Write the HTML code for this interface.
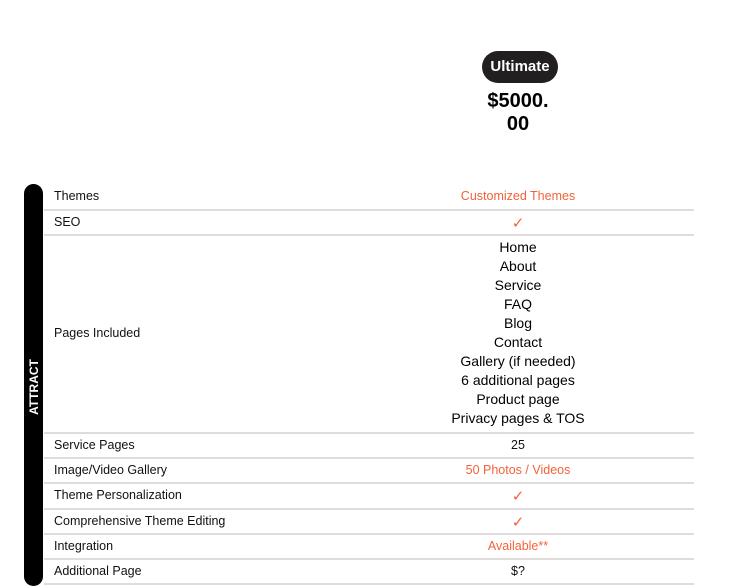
<!DOCTYPE html>
<html><head><style>
body{margin:0;width:735px;height:586px;background:#fff;font-family:"Liberation Sans",sans-serif;position:relative;overflow:hidden;color:#111}
.badge{position:absolute;left:482px;top:51px;width:76px;height:32px;border-radius:16px;background:#231f20;color:#fff;font-weight:bold;font-size:15px;line-height:31px;text-align:center}
.price{position:absolute;left:463px;top:90px;width:110px;text-align:center;font-weight:bold;font-size:20px;line-height:23px;color:#000}
.bar{position:absolute;left:24px;top:184px;width:19px;height:402px;background:#000;border-radius:10px}
.vt{position:absolute;left:34px;top:387px;transform:translate(-50%,-50%) rotate(-90deg);color:#fff;font-weight:bold;font-size:12px;white-space:nowrap}
.row{position:absolute;left:44px;width:650px;border-bottom:2px solid #e0dcdc;font-size:12.5px}
.l{position:absolute;left:10px;top:50%;transform:translateY(-56%)}
.v{position:absolute;left:324px;width:300px;top:50%;transform:translate(0,-56%);text-align:center;font-size:12.5px}
.o{color:#f4623a}
.v.c{font-size:15px;transform:translate(0,-50%)}
.v.pl{font-size:14px;line-height:19px;color:#000;transform:translate(0,-50%);margin-top:-1px}
</style></head><body>
<div class="badge">Ultimate</div>
<div class="price">$5000.<br>00</div>
<div class="bar"></div>
<div class="vt">ATTRACT</div>
<div class="row" style="top:184px;height:25px"><span class="l">Themes</span><span class="v o">Customized Themes</span></div>
<div class="row" style="top:211px;height:23px"><span class="l">SEO</span><span class="v o c">✓</span></div>
<div class="row" style="top:236px;height:196px"><span class="l">Pages Included</span><span class="v pl">Home<br>About<br>Service<br>FAQ<br>Blog<br>Contact<br>Gallery (if needed)<br>6 additional pages<br>Product page<br>Privacy pages &amp; TOS</span></div>
<div class="row" style="top:434px;height:23px"><span class="l">Service Pages</span><span class="v">25</span></div>
<div class="row" style="top:459px;height:23px"><span class="l">Image/Video Gallery</span><span class="v o">50 Photos / Videos</span></div>
<div class="row" style="top:484px;height:24px"><span class="l">Theme Personalization</span><span class="v o c">✓</span></div>
<div class="row" style="top:510px;height:23px"><span class="l">Comprehensive Theme Editing</span><span class="v o c">✓</span></div>
<div class="row" style="top:535px;height:23px"><span class="l">Integration</span><span class="v o">Available**</span></div>
<div class="row" style="top:560px;height:23px"><span class="l">Additional Page</span><span class="v">$?</span></div>
</body></html>
